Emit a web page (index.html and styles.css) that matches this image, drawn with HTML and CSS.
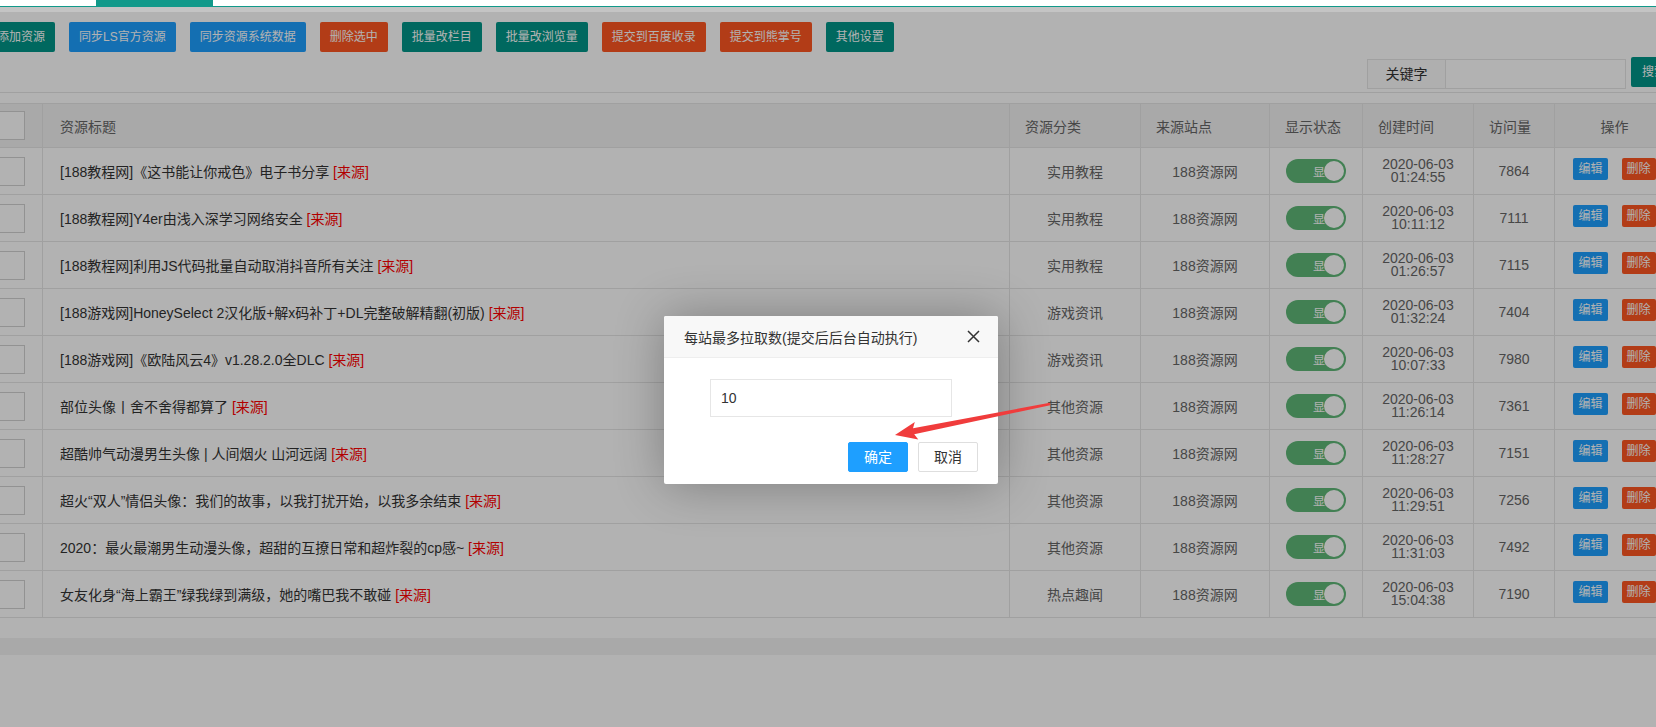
FILE: index.html
```html
<!DOCTYPE html>
<html lang="zh-CN">
<head>
<meta charset="utf-8">
<title>资源管理</title>
<link rel="stylesheet" href="styles.css">
</head>
<body>
<div class="topbar"><div class="tab-active"></div></div>
<div class="strip"></div>
<div class="main">
  <div class="toolbar">
    <span class="btn btn-teal">添加资源</span>
    <span class="btn btn-blue">同步LS官方资源</span>
    <span class="btn btn-blue">同步资源系统数据</span>
    <span class="btn btn-red">删除选中</span>
    <span class="btn btn-teal">批量改栏目</span>
    <span class="btn btn-teal">批量改浏览量</span>
    <span class="btn btn-red">提交到百度收录</span>
    <span class="btn btn-red">提交到熊掌号</span>
    <span class="btn btn-teal">其他设置</span>
  </div>
  <div class="search-row">
    <span class="kw-label">关键字</span>
    <span class="kw-input"></span>
    <span class="btn btn-teal search-btn">搜索</span>
  </div>
  <div class="divider"></div>
  <table class="grid">
    <colgroup>
      <col class="c-ck"><col class="c-title"><col class="c-cat"><col class="c-site"><col class="c-status"><col class="c-time"><col class="c-visit"><col class="c-op">
    </colgroup>
    <thead>
      <tr>
        <th class="ck"><span class="ckbox"></span></th>
        <th class="th-title">资源标题</th>
        <th>资源分类</th>
        <th>来源站点</th>
        <th>显示状态</th>
        <th>创建时间</th>
        <th>访问量</th>
        <th class="th-op">操作</th>
      </tr>
    </thead>
    <tbody>
      <tr>
        <td class="ck"><span class="ckbox"></span></td>
        <td class="title">[188教程网]《这书能让你戒色》电子书分享 <span class="src">[来源]</span></td>
        <td>实用教程</td><td>188资源网</td>
        <td><span class="switch"><em>显示</em><i></i></span></td>
        <td class="dt">2020-06-03<br>01:24:55</td><td>7864</td>
        <td><span class="ops"><span class="xbtn xbtn-blue">编辑</span><span class="xbtn xbtn-red">删除</span></span></td>
      </tr>
      <tr>
        <td class="ck"><span class="ckbox"></span></td>
        <td class="title">[188教程网]Y4er由浅入深学习网络安全 <span class="src">[来源]</span></td>
        <td>实用教程</td><td>188资源网</td>
        <td><span class="switch"><em>显示</em><i></i></span></td>
        <td class="dt">2020-06-03<br>10:11:12</td><td>7111</td>
        <td><span class="ops"><span class="xbtn xbtn-blue">编辑</span><span class="xbtn xbtn-red">删除</span></span></td>
      </tr>
      <tr>
        <td class="ck"><span class="ckbox"></span></td>
        <td class="title">[188教程网]利用JS代码批量自动取消抖音所有关注 <span class="src">[来源]</span></td>
        <td>实用教程</td><td>188资源网</td>
        <td><span class="switch"><em>显示</em><i></i></span></td>
        <td class="dt">2020-06-03<br>01:26:57</td><td>7115</td>
        <td><span class="ops"><span class="xbtn xbtn-blue">编辑</span><span class="xbtn xbtn-red">删除</span></span></td>
      </tr>
      <tr>
        <td class="ck"><span class="ckbox"></span></td>
        <td class="title">[188游戏网]HoneySelect 2汉化版+解x码补丁+DL完整破解精翻(初版) <span class="src">[来源]</span></td>
        <td>游戏资讯</td><td>188资源网</td>
        <td><span class="switch"><em>显示</em><i></i></span></td>
        <td class="dt">2020-06-03<br>01:32:24</td><td>7404</td>
        <td><span class="ops"><span class="xbtn xbtn-blue">编辑</span><span class="xbtn xbtn-red">删除</span></span></td>
      </tr>
      <tr>
        <td class="ck"><span class="ckbox"></span></td>
        <td class="title">[188游戏网]《欧陆风云4》v1.28.2.0全DLC <span class="src">[来源]</span></td>
        <td>游戏资讯</td><td>188资源网</td>
        <td><span class="switch"><em>显示</em><i></i></span></td>
        <td class="dt">2020-06-03<br>10:07:33</td><td>7980</td>
        <td><span class="ops"><span class="xbtn xbtn-blue">编辑</span><span class="xbtn xbtn-red">删除</span></span></td>
      </tr>
      <tr>
        <td class="ck"><span class="ckbox"></span></td>
        <td class="title">部位头像丨舍不舍得都算了 <span class="src">[来源]</span></td>
        <td>其他资源</td><td>188资源网</td>
        <td><span class="switch"><em>显示</em><i></i></span></td>
        <td class="dt">2020-06-03<br>11:26:14</td><td>7361</td>
        <td><span class="ops"><span class="xbtn xbtn-blue">编辑</span><span class="xbtn xbtn-red">删除</span></span></td>
      </tr>
      <tr>
        <td class="ck"><span class="ckbox"></span></td>
        <td class="title">超酷帅气动漫男生头像 | 人间烟火 山河远阔 <span class="src">[来源]</span></td>
        <td>其他资源</td><td>188资源网</td>
        <td><span class="switch"><em>显示</em><i></i></span></td>
        <td class="dt">2020-06-03<br>11:28:27</td><td>7151</td>
        <td><span class="ops"><span class="xbtn xbtn-blue">编辑</span><span class="xbtn xbtn-red">删除</span></span></td>
      </tr>
      <tr>
        <td class="ck"><span class="ckbox"></span></td>
        <td class="title">超火“双人”情侣头像：我们的故事，以我打扰开始，以我多余结束 <span class="src">[来源]</span></td>
        <td>其他资源</td><td>188资源网</td>
        <td><span class="switch"><em>显示</em><i></i></span></td>
        <td class="dt">2020-06-03<br>11:29:51</td><td>7256</td>
        <td><span class="ops"><span class="xbtn xbtn-blue">编辑</span><span class="xbtn xbtn-red">删除</span></span></td>
      </tr>
      <tr>
        <td class="ck"><span class="ckbox"></span></td>
        <td class="title">2020：最火最潮男生动漫头像，超甜的互撩日常和超炸裂的cp感~ <span class="src">[来源]</span></td>
        <td>其他资源</td><td>188资源网</td>
        <td><span class="switch"><em>显示</em><i></i></span></td>
        <td class="dt">2020-06-03<br>11:31:03</td><td>7492</td>
        <td><span class="ops"><span class="xbtn xbtn-blue">编辑</span><span class="xbtn xbtn-red">删除</span></span></td>
      </tr>
      <tr>
        <td class="ck"><span class="ckbox"></span></td>
        <td class="title">女友化身“海上霸王”绿我绿到满级，她的嘴巴我不敢碰 <span class="src">[来源]</span></td>
        <td>热点趣闻</td><td>188资源网</td>
        <td><span class="switch"><em>显示</em><i></i></span></td>
        <td class="dt">2020-06-03<br>15:04:38</td><td>7190</td>
        <td><span class="ops"><span class="xbtn xbtn-blue">编辑</span><span class="xbtn xbtn-red">删除</span></span></td>
      </tr>
    </tbody>
  </table>
  <div class="after-table"></div>
  <div class="band"></div>
</div>

<div class="shade"></div>

<div class="layer">
  <div class="layer-title">
    <span>每站最多拉取数(提交后后台自动执行)</span>
    <svg class="layer-close" width="13" height="13" viewBox="0 0 13 13"><path d="M1 1 L12 12 M12 1 L1 12" stroke="#333" stroke-width="1.5" fill="none"/></svg>
  </div>
  <div class="layer-content">
    <input class="layer-input" type="text" value="10">
  </div>
  <div class="layer-btns">
    <span class="lbtn lbtn-primary">确定</span>
    <span class="lbtn">取消</span>
  </div>
</div>

<svg class="arrow" width="180" height="55" viewBox="0 0 180 55">
  <path d="M15 40 L38.3 44.5 L34.2 39.2 L170.2 10.2 L169.8 7.8 L33 33.3 L34.8 26.9 Z" fill="#f03c3c"/>
</svg>
</body>
</html>
```

FILE: styles.css
```css
html, body {
  margin: 0;
  padding: 0;
}
body {
  width: 1656px;
  height: 727px;
  overflow: hidden;
  position: relative;
  background: #fff;
  font-family: "Liberation Sans", "Noto Sans CJK SC", sans-serif;
}

.topbar {
  height: 6px;
  background: #fff;
  border-bottom: 1px solid #11998a;
  padding-left: 96px;
}
.tab-active {
  width: 117px;
  height: 6px;
  background: #11998a;
}
.strip {
  height: 5px;
  background: #c4c4c4;
}

.main {
  margin-left: -13px;
  width: 1690px;
}

.toolbar {
  padding-top: 10px;
  display: flex;
  gap: 14px;
}
.btn {
  display: inline-block;
  height: 30px;
  line-height: 30px;
  padding: 0 10px;
  font-size: 12px;
  color: #fff;
  border-radius: 2px;
  white-space: nowrap;
}
.btn-teal { background: #009688; }
.btn-blue { background: #1e9fff; }
.btn-red { background: #ff5722; }

.search-row {
  display: flex;
  justify-content: flex-end;
  align-items: flex-start;
  margin-top: 5px;
  height: 32px;
}
.kw-label {
  margin-top: 2px;
  width: 79px;
  height: 30px;
  box-sizing: border-box;
  border: 1px solid #e6e6e6;
  background: #fbfbfb;
  text-align: center;
  line-height: 28px;
  font-size: 14px;
  color: #333;
}
.kw-input {
  margin-top: 2px;
  width: 180px;
  height: 30px;
  box-sizing: border-box;
  border: 1px solid #e6e6e6;
  border-left: 0;
  background: #fff;
}
.search-btn {
  margin-left: 5px;
  padding: 0 11px;
}

.divider {
  margin-top: 3px;
  height: 1px;
  background: #e6e6e6;
}

.grid {
  margin-top: 10px;
  border-collapse: collapse;
  table-layout: fixed;
  width: 1687px;
  font-size: 14px;
  background: #fff;
}
.c-ck { width: 55px; }
.c-title { width: 967px; }
.c-cat { width: 131px; }
.c-site { width: 129px; }
.c-status { width: 93px; }
.c-time { width: 111px; }
.c-visit { width: 81px; }
.c-op { width: 120px; }

.grid th, .grid td {
  border: 1px solid #e6e6e6;
  padding: 0;
  white-space: nowrap;
  overflow: hidden;
}
.grid th {
  height: 43px;
  background: #f2f2f2;
  color: #666;
  font-weight: normal;
  text-align: left;
  padding-left: 15px;
}
.grid th.th-title { padding-left: 17px; }
.grid th.th-op { text-align: center; padding-left: 0; }
.grid td {
  height: 46px;
  text-align: center;
  color: #666;
}
.grid td.title {
  text-align: left;
  padding-left: 17px;
  color: #333;
}
.grid th.ck, .grid td.ck {
  text-align: left;
  padding-left: 7px;
}
.ckbox {
  display: block;
  width: 30px;
  height: 29px;
  box-sizing: border-box;
  border: 1px solid #d2d2d2;
  background: #fff;
}
.src { color: #f00; }
.grid td.dt { line-height: 13px; }

.switch {
  display: inline-flex;
  align-items: center;
  position: relative;
  width: 60px;
  height: 24px;
  box-sizing: border-box;
  padding-left: 27px;
  border-radius: 20px;
  background: #5fb878;
  vertical-align: middle;
  overflow: hidden;
}
.switch em {
  font-style: normal;
  font-size: 12px;
  color: #fff;
}
.switch i {
  position: absolute;
  right: 2px;
  top: 2px;
  width: 20px;
  height: 20px;
  border-radius: 50%;
  background: #fff;
}

.ops {
  display: inline-flex;
  gap: 14px;
  vertical-align: middle;
  margin-bottom: 4px;
}
.xbtn {
  height: 22px;
  line-height: 22px;
  padding: 0 5px;
  font-size: 12px;
  color: #fff;
  border-radius: 2px;
}
.xbtn-blue { background: #1e9fff; }
.xbtn-red { background: #ff5722; }

.after-table {
  height: 20px;
  background: #fff;
}
.band {
  height: 17px;
  background: #f2f2f2;
}

.shade {
  position: absolute;
  left: 0;
  right: 0;
  top: 12px;
  bottom: 0;
  background: rgba(0, 0, 0, 0.3);
  z-index: 10;
}

.layer {
  position: absolute;
  left: 664px;
  top: 316px;
  width: 334px;
  background: #fff;
  border-radius: 2px;
  box-shadow: 1px 1px 50px rgba(0, 0, 0, 0.3);
  z-index: 20;
}
.layer-title {
  height: 41px;
  border-bottom: 1px solid #eee;
  background: #f8f8f8;
  border-radius: 2px 2px 0 0;
  padding: 0 18px 0 20px;
  display: flex;
  align-items: center;
  justify-content: space-between;
  font-size: 14px;
  color: #333;
}
.layer-content {
  padding: 21px 46px 0;
}
.layer-input {
  display: block;
  width: 242px;
  height: 38px;
  box-sizing: border-box;
  margin: 0;
  border: 1px solid #e6e6e6;
  padding: 0 10px;
  font-family: inherit;
  font-size: 14px;
  color: #333;
  outline: none;
}
.layer-btns {
  display: flex;
  justify-content: flex-end;
  gap: 10px;
  padding: 25px 20px 12px;
}
.lbtn {
  width: 60px;
  height: 30px;
  box-sizing: border-box;
  border: 1px solid #dedede;
  border-radius: 2px;
  background: #fff;
  color: #333;
  font-size: 14px;
  line-height: 28px;
  text-align: center;
}
.lbtn-primary {
  background: #1e9fff;
  border-color: #1e9fff;
  color: #fff;
}

.arrow {
  position: absolute;
  left: 880px;
  top: 395px;
  z-index: 30;
}
```
